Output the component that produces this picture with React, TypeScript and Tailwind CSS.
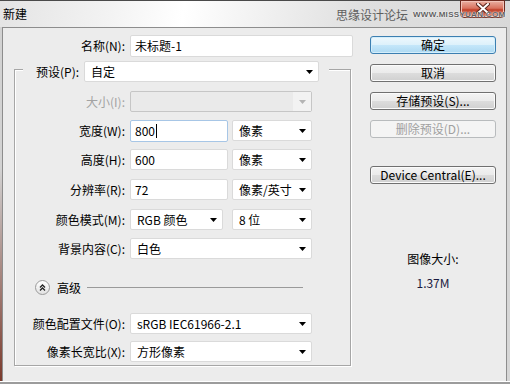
import { clsx } from 'clsx'
import type { ReactNode } from 'react'

function Arrow({ disabled }: { disabled?: boolean }) {
  return (
    <svg width="7" height="4" viewBox="0 0 7 4" className="shrink-0">
      <path d="M0 0h7L3.5 4z" fill={disabled ? '#b4b4b4' : '#000'} />
    </svg>
  )
}

function Select({ value, className, disabled }: { value?: string; className?: string; disabled?: boolean }) {
  if (disabled) {
    return (
      <div className={clsx('flex h-[21px] rounded-[2px] border border-[#c6c6c6] bg-[#eaeaea]', className)}>
        <div className="flex-1" />
        <div className="flex w-[18px] items-center justify-center bg-[#f2f2f2]">
          <Arrow disabled />
        </div>
      </div>
    )
  }
  return (
    <div
      className={clsx(
        'flex h-[21px] items-center justify-between rounded-[2px] border border-[#dadada] bg-white pl-[6px] pr-[5px]',
        className
      )}
    >
      <span>{value}</span>
      <Arrow />
    </div>
  )
}

function Input({ value, className, focused }: { value: string; className?: string; focused?: boolean }) {
  return (
    <div
      className={clsx(
        'flex h-[21px] items-center rounded-[2px] border bg-white pl-[4px]',
        focused ? 'border-[#a7c6e6]' : 'border-[#dadada]',
        className
      )}
    >
      <span>{value}</span>
      {focused && <span className="ml-[1px] h-[14px] w-px bg-black" />}
    </div>
  )
}

function Row({ label, children, className, muted }: { label: string; children: ReactNode; className?: string; muted?: boolean }) {
  return (
    <div className={clsx('flex h-[21px] items-center', className)}>
      <span className={clsx('w-[115px] shrink-0 pr-[5px] text-right', muted && 'text-[#a3a3a3]')}>{label}</span>
      {children}
    </div>
  )
}

function Btn({ children, primary, disabled, className }: { children: ReactNode; primary?: boolean; disabled?: boolean; className?: string }) {
  return (
    <div
      className={clsx(
        'flex h-[18px] w-[126px] items-center justify-center rounded-[3px] border',
        primary &&
          'border-[#3c7fb1] bg-[linear-gradient(#eef8fd,#ddf1fb_49%,#c5e7fa_50%,#add9f2)] shadow-[inset_0_0_0_1px_#d4eefb]',
        disabled && 'border-[#b8bbbd] bg-[#f4f4f4] text-[#a0a0a0]',
        !primary &&
          !disabled &&
          'border-[#707070] bg-[linear-gradient(#f3f3f3,#ebebeb_49%,#dddddd_50%,#d0d0d0)] shadow-[inset_0_0_0_1px_#fbfbfb]',
        className
      )}
    >
      {children}
    </div>
  )
}

export default function App() {
  return (
    <div className="relative h-[384px] w-[510px] overflow-hidden bg-[#dcdcdc] font-['Noto_Sans_CJK_SC','Liberation_Sans',sans-serif] text-[12px] leading-[16px] text-black">
      {/* title bar */}
      <div className="relative flex h-[27px] items-center border-t border-[#4a4a4a] bg-[linear-gradient(100deg,#e4e4e4_0%,#f3f3f3_22%,#ffffff_36%,#f4f4f4_48%,#e0e0e0_70%,#d8d8d8_100%)] pl-[3px]">
        <span className="text-[12px]">新建</span>
        <div className="absolute right-[5px] top-[-1px] flex h-[18px] w-[45px] items-center justify-center rounded-b-[4px] border border-[#6e2a1f] bg-[linear-gradient(#eab0a3,#d9735f_45%,#c2412a_55%,#cf6a52)] shadow-[inset_0_0_0_1px_#f2c3b8]">
          <svg width="14" height="11" viewBox="0 0 14 11" className="mb-[2px]">
            <path d="M2 1l10 9M12 1L2 10" stroke="#5a241c" strokeWidth="4" strokeLinecap="square" />
            <path d="M2 1l10 9M12 1L2 10" stroke="#fff" strokeWidth="2" strokeLinecap="square" />
          </svg>
        </div>
        <div className="absolute left-[336px] top-[6px] z-10 flex items-center gap-[5px] whitespace-nowrap text-[#5e5e5e]">
          <span className="text-[12px]">思缘设计论坛</span>
          <span className="font-['Liberation_Sans',sans-serif] text-[8px] font-bold leading-[10px] tracking-[0.3px] text-[#606060] [text-shadow:0_0_2px_#fff,0_0_1px_#fff]">
            WWW.MISSYUAN.COM
          </span>
        </div>
      </div>

      {/* body */}
      <div className="flex">
        <div className="w-[2px] bg-[linear-gradient(#d2d2d2_40%,#7a3a2c)]" />
        <div className="h-[354px] w-[505px] border-x border-t border-[#8d8d8d] bg-[#ececec]">
          <div className="flex pl-[11px] pt-[7px]">
            {/* left column */}
            <div className="w-[339px]">
              <div className="flex h-[22px] items-center">
                <span className="w-[116px] shrink-0 pr-[5px] text-right">名称(N):</span>
                <Input value="未标题-1" className="h-[22px] w-[223px]" />
              </div>

              <div className="mt-[12px] w-[337px] border border-[#a6a6a6] pb-[3px] shadow-[inset_1px_1px_0_#fff,1px_1px_0_#fff]">
                <div className="-mt-[9px] ml-[8px] flex h-[21px] w-[306px] items-center gap-[5px] bg-[#ececec] pl-[13px]">
                  <span>预设(P):</span>
                  <Select value="自定" className="w-[235px]" />
                </div>

                <Row label="大小(I):" muted className="mt-[9px]">
                  <Select disabled className="w-[182px]" />
                </Row>
                <Row label="宽度(W):" className="mt-[8px]">
                  <Input value="800" focused className="h-[22px] w-[98px]" />
                  <Select value="像素" className="ml-[4px] w-[80px]" />
                </Row>
                <Row label="高度(H):" className="mt-[8px]">
                  <Input value="600" className="w-[98px]" />
                  <Select value="像素" className="ml-[4px] w-[80px]" />
                </Row>
                <Row label="分辨率(R):" className="mt-[9px]">
                  <Input value="72" className="w-[98px]" />
                  <Select value="像素/英寸" className="ml-[4px] w-[80px]" />
                </Row>
                <Row label="颜色模式(M):" className="mt-[9px]">
                  <Select value="RGB 颜色" className="w-[93px]" />
                  <Select value="8 位" className="ml-[9px] w-[80px]" />
                </Row>
                <Row label="背景内容(C):" className="mt-[8px]">
                  <Select value="白色" className="w-[182px]" />
                </Row>

                <div className="mt-[21px] flex h-[15px] items-center pl-[20px]">
                  <div className="flex h-[15px] w-[15px] items-center justify-center rounded-full border border-[#9a9a9a] bg-[linear-gradient(#ffffff,#e2e2e2)]">
                    <svg width="7" height="7" viewBox="0 0 7 7">
                      <path d="M1 3.5L3.5 1 6 3.5M1 6.5L3.5 4 6 6.5" fill="none" stroke="#222" strokeWidth="1.3" />
                    </svg>
                  </div>
                  <span className="ml-[7px]">高级</span>
                  <div className="ml-[6px] h-px w-[216px] bg-[#9a9a9a]" />
                </div>

                <Row label="颜色配置文件(O):" className="mt-[18px]">
                  <Select value="sRGB IEC61966-2.1" className="w-[182px]" />
                </Row>
                <Row label="像素长宽比(X):" className="mt-[7px]">
                  <Select value="方形像素" className="w-[182px]" />
                </Row>
              </div>
            </div>

            {/* right column */}
            <div className="ml-[17px] mt-[1px] flex w-[126px] flex-col">
              <Btn primary>确定</Btn>
              <Btn className="mt-[10px]">取消</Btn>
              <Btn className="mt-[10px]">存储预设(S)...</Btn>
              <Btn disabled className="mt-[10px]">删除预设(D)...</Btn>
              <Btn className="mt-[28px]">Device Central(E)...</Btn>
              <div className="mt-[67px] text-center">图像大小:</div>
              <div className="mt-[8px] text-center text-[#1a1a40]">1.37M</div>
            </div>
          </div>
        </div>
        <div className="w-[3px] bg-[#d6d6d6]" />
      </div>
      <div className="h-px bg-white" />
      <div className="h-[2px] bg-[#9c9c9c]" />
    </div>
  )
}
